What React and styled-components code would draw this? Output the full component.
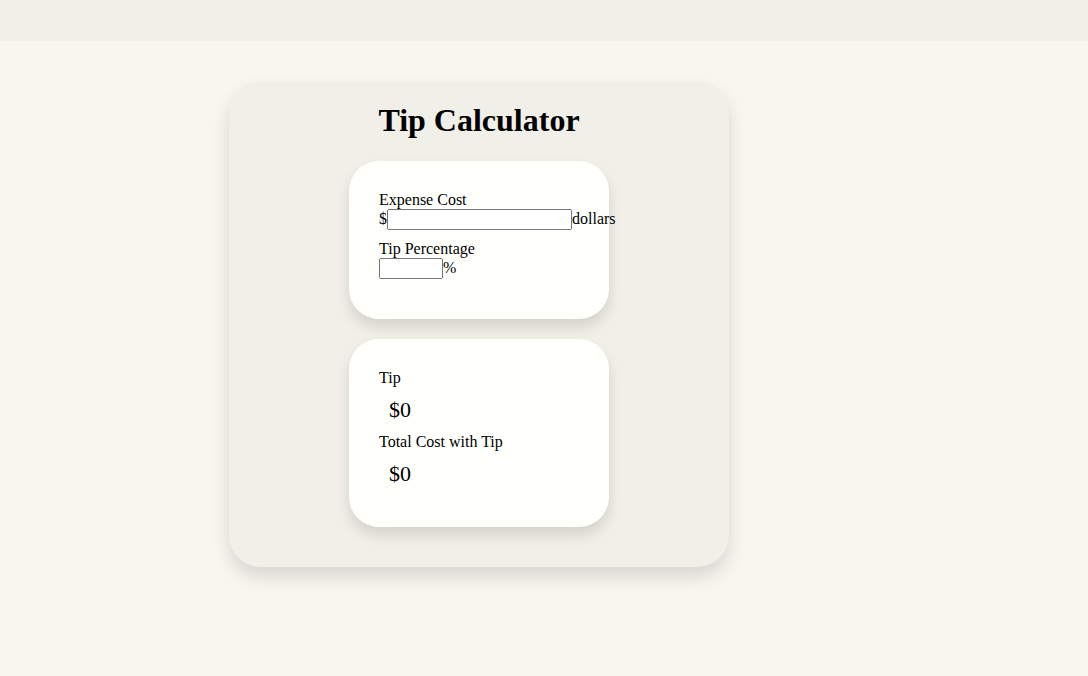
import styled, { createGlobalStyle } from "styled-components"

const Global = createGlobalStyle`
    body{
        margin: 0;
        background-color: #f8f6ef;
        font-family: "Liberation Serif", "Times New Roman", serif;
        color: #000;
    }
`

const Header = styled.header`
    width: 100%;
    height: 41px;
    background-color: #f0f0e8;
`

const Main = styled.main`
    padding: 40px 0 60px 229px;
`

const Calculator = styled.section`
    width: 500px;
    box-sizing: border-box;
    padding: 21px 0 40px;
    background-color: #f0f0e8;
    border-radius: 32px;
    box-shadow: 0 10px 18px rgba(0, 0, 0, 0.13);
    display: flex;
    flex-direction: column;
    align-items: center;

    & > h1{
        margin: 0 0 22px;
        font-size: 32px;
        font-weight: bold;
    }
`

const Card = styled.div`
    width: 260px;
    box-sizing: border-box;
    padding: 30px 30px ${props => props.$bottom || 30}px;
    margin-bottom: ${props => props.$last ? 0 : 20}px;
    background-color: #fffffc;
    border-radius: 30px;
    box-shadow: 0 8px 14px rgba(0, 0, 0, 0.12);
    font-size: 16px;
`

const Field = styled.div`
    margin-bottom: 10px;
`

const Row = styled.div`
    white-space: nowrap;
`

const Input = styled.input`
    box-sizing: border-box;
    width: ${props => props.$w}px;
    height: 21px;
    margin: 0;
    vertical-align: baseline;
`

const Value = styled.p`
    margin: 0;
    padding: 10px 10px;
    font-size: 22px;
`

export default function App(){
    return(
        <>
            <Global/>
            <Header/>
            <Main>
                <Calculator>
                    <h1>Tip Calculator</h1>
                    <Card $bottom={30}>
                        <Field>
                            <div>Expense Cost</div>
                            <Row>$<Input type="text" $w={185}/>dollars</Row>
                        </Field>
                        <Field>
                            <div>Tip Percentage</div>
                            <Row><Input type="text" $w={64}/>%</Row>
                        </Field>
                    </Card>
                    <Card $last $bottom={30}>
                        <div>Tip</div>
                        <Value>$0</Value>
                        <div>Total Cost with Tip</div>
                        <Value>$0</Value>
                    </Card>
                </Calculator>
            </Main>
        </>
    )
}
